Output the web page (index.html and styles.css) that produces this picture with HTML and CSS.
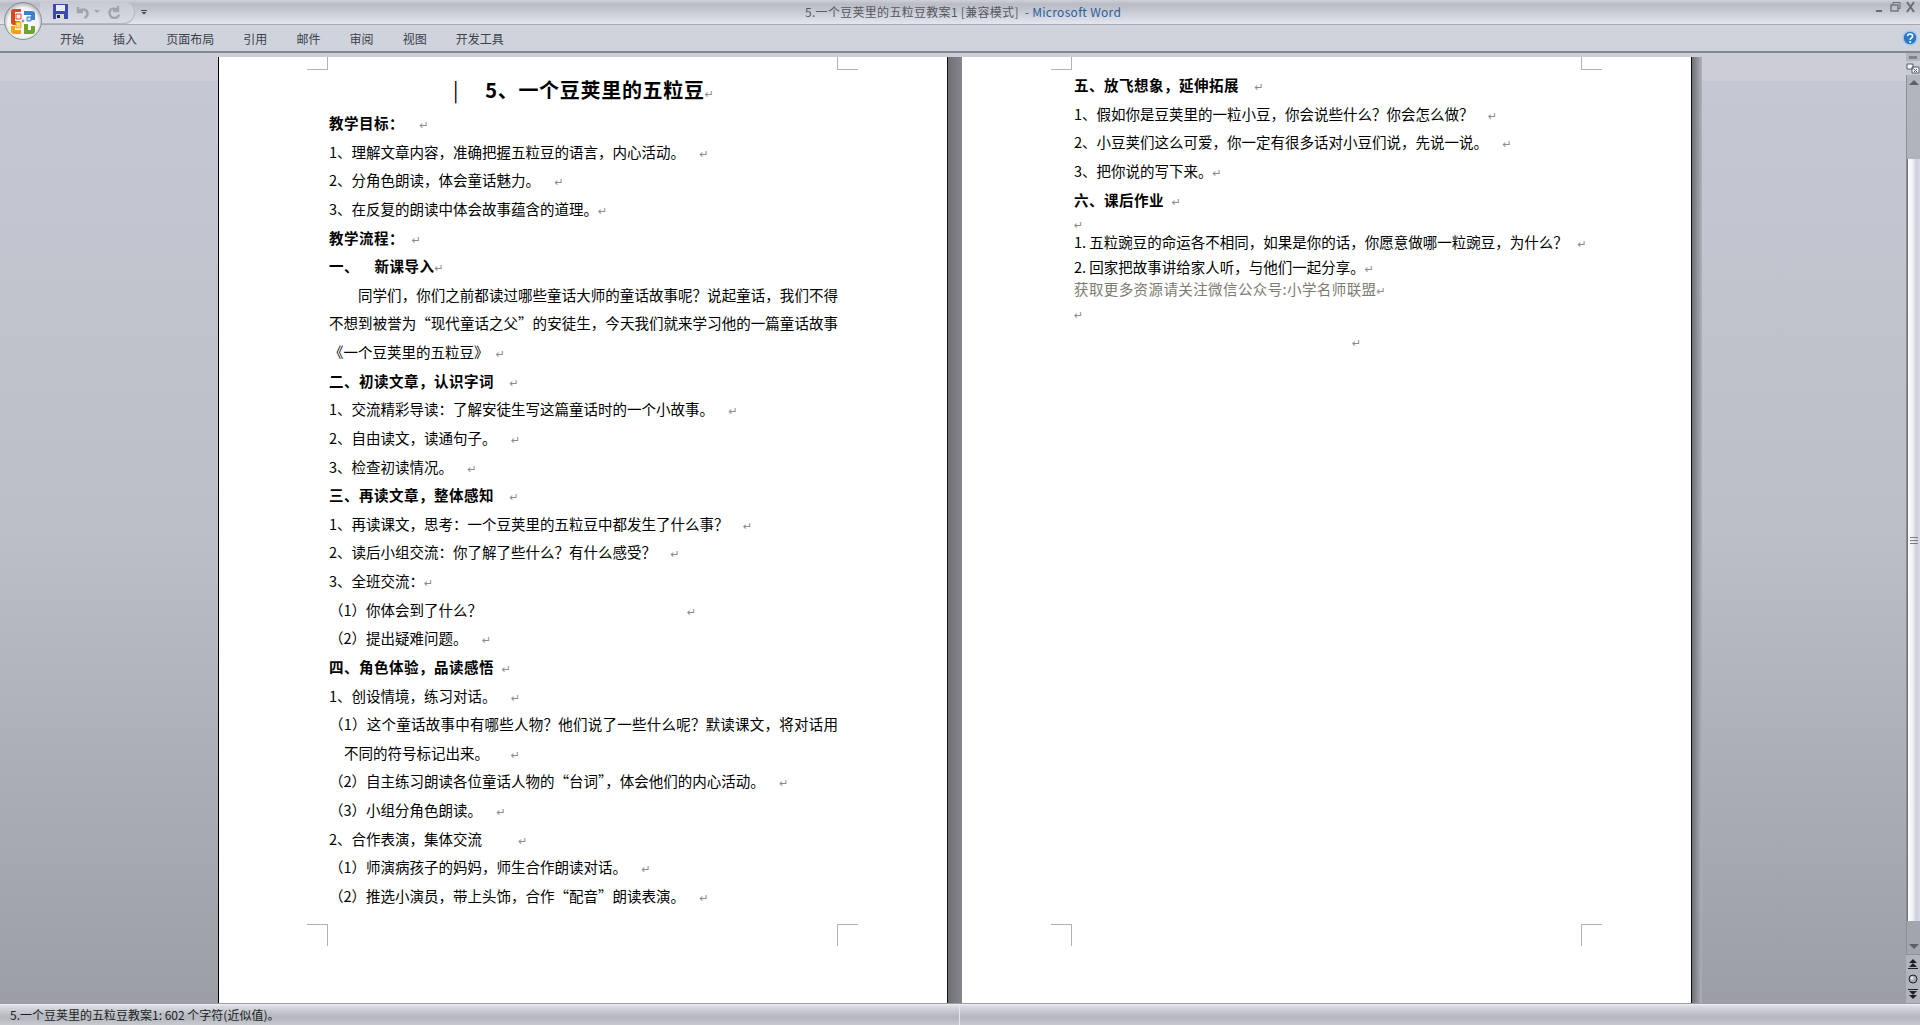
FILE: index.html
```html
<!DOCTYPE html>
<html lang="zh-CN">
<head>
    <meta charset="UTF-8">
    <title>5.一个豆荚里的五粒豆教案1 [兼容模式] - Microsoft Word</title>
    <link rel="stylesheet" href="styles.css">
</head>
<body>
<div class="app">
    <!-- Office button -->
    <svg class="office-btn" width="40" height="40" viewBox="0 0 40 40">
        <defs>
            <radialGradient id="orb" cx="50%" cy="55%" r="55%">
                <stop offset="0" stop-color="#ffffff"/>
                <stop offset=".75" stop-color="#f1f2f4"/>
                <stop offset="1" stop-color="#a9acb4"/>
            </radialGradient>
        </defs>
        <circle cx="20" cy="20" r="18.5" fill="url(#orb)" stroke="#8c8f97"/>
        <path d="M8 11q0-3 3-3h7v3h-6v9h5v4h-6q-3 0-3-3z" fill="#d9481c"/>
        <path d="M13 13h5v5h-5z" fill="#f6f6f6" stroke="#d9481c"/>
        <path d="M21 10h8q3 0 3 3v6h-4v-5h-7z" fill="#3f7fc4"/>
        <path d="M24 16h4v4h-4z" fill="#cfe2f5" stroke="#3f7fc4"/>
        <path d="M8 25h4v4h6v4h-7q-3 0-3-3z" fill="#f2a311"/>
        <path d="M13 21h5v6h-5z" fill="#fbd679" stroke="#f2a311"/>
        <path d="M21 23h4v6h3v-4h4v5q0 3-3 3h-8z" fill="#6fa52b"/>
        <circle cx="20" cy="20" r="1.4" fill="#7a9cc8"/>
    </svg>

    <!-- Title bar -->
    <header class="titlebar">
        <div class="qat">
            <svg width="15" height="15" viewBox="0 0 15 15">
                <rect width="15" height="15" fill="#3c49a8"/>
                <rect x="3" y="1" width="9" height="6" fill="#e8ecf8"/>
                <rect x="3" y="10" width="8" height="5" fill="#d6d8de"/>
                <rect x="4" y="11" width="3" height="3" fill="#222"/>
            </svg>
            <svg class="qat-undo" width="14" height="14" viewBox="0 0 14 14">
                <path d="M2 2v5h5M2.5 6.5C5 3.5 11 3.5 11.5 8c.2 2-1 4-3 5" fill="none" stroke="#a1a4ac" stroke-width="2.4"/>
            </svg>
            <span class="qat-caret"></span>
            <svg class="qat-redo" width="14" height="14" viewBox="0 0 14 14">
                <path d="M11 1v5H6M10.5 5.5C8 2.5 3 3 2.5 7.500c-.3 3 2 5.500 5 5.500 2.500 0 4-1.500 4.500-3.500" fill="none" stroke="#a1a4ac" stroke-width="2.400"/>
            </svg>
        </div>
        <span class="qat-more"></span>
        <div class="doc-title">5.一个豆荚里的五粒豆教案1 [兼容模式] <span class="app-name">- Microsoft Word</span></div>
        <div class="win-controls">
            <svg width="44" height="14" viewBox="0 0 44 14">
                <rect x="1" y="9" width="6" height="2" fill="#6a6d75"/>
                <rect x="16" y="4" width="7" height="6" fill="none" stroke="#6a6d75" stroke-width="1.300"/>
                <path d="M18 4V1.500h7v6h-2" fill="none" stroke="#6a6d75"/>
                <path d="M32 1l7 10M39 1l-7 10" stroke="#6a6d75" stroke-width="2"/>
            </svg>
        </div>
    </header>

    <!-- Ribbon tabs -->
    <nav class="ribbon">
        <span class="tab">开始</span>
        <span class="tab">插入</span>
        <span class="tab">页面布局</span>
        <span class="tab">引用</span>
        <span class="tab">邮件</span>
        <span class="tab">审阅</span>
        <span class="tab">视图</span>
        <span class="tab">开发工具</span>
        <svg class="help" width="16" height="16" viewBox="0 0 16 16">
            <circle cx="8" cy="8" r="7" fill="#2b78c8" stroke="#a8c8ea" stroke-width="1.500"/>
            <path d="M5.500 6.200C5.700 4.500 7 4 8 4c1.500 0 2.600.9 2.600 2.200 0 2-2.400 2-2.400 3.800" fill="none" stroke="#fff" stroke-width="1.600"/>
            <rect x="7.300" y="11" width="1.800" height="1.800" fill="#fff"/>
        </svg>
    </nav>

    <!-- Document area -->
    <main class="workspace">
        <div class="spread">
            <section class="page page-first">
                <i class="crop crop-tl"></i><i class="crop crop-tr"></i><i class="crop crop-bl"></i><i class="crop crop-br"></i>
                <div class="body">
                    <h1 class="doc-h"><span class="bar">|</span>5、一个豆荚里的五粒豆<span class="pm">↵</span></h1>
                    <p class="line b">教学目标：  <span class="pm">↵</span></p>
                    <p class="line">1、理解文章内容，准确把握五粒豆的语言，内心活动。  <span class="pm">↵</span></p>
                    <p class="line">2、分角色朗读，体会童话魅力。  <span class="pm">↵</span></p>
                    <p class="line">3、在反复的朗读中体会故事蕴含的道理。<span class="pm">↵</span></p>
                    <p class="line b">教学流程： <span class="pm">↵</span></p>
                    <p class="line b">一、  新课导入<span class="pm">↵</span></p>
                    <p class="line just first-indent">同学们，你们之前都读过哪些童话大师的童话故事呢？说起童话，我们不得</p>
                    <p class="line just">不想到被誉为“现代童话之父”的安徒生，今天我们就来学习他的一篇童话故事</p>
                    <p class="line">《一个豆荚里的五粒豆》 <span class="pm">↵</span></p>
                    <p class="line b">二、初读文章，认识字词  <span class="pm">↵</span></p>
                    <p class="line">1、交流精彩导读：了解安徒生写这篇童话时的一个小故事。  <span class="pm">↵</span></p>
                    <p class="line">2、自由读文，读通句子。  <span class="pm">↵</span></p>
                    <p class="line">3、检查初读情况。  <span class="pm">↵</span></p>
                    <p class="line b">三、再读文章，整体感知  <span class="pm">↵</span></p>
                    <p class="line">1、再读课文，思考：一个豆荚里的五粒豆中都发生了什么事？  <span class="pm">↵</span></p>
                    <p class="line">2、读后小组交流：你了解了些什么？有什么感受？  <span class="pm">↵</span></p>
                    <p class="line">3、全班交流：<span class="pm">↵</span></p>
                    <p class="line">（1）你体会到了什么？<span class="pm pm-far">↵</span></p>
                    <p class="line">（2）提出疑难问题。  <span class="pm">↵</span></p>
                    <p class="line b">四、角色体验，品读感悟 <span class="pm">↵</span></p>
                    <p class="line">1、创设情境，练习对话。  <span class="pm">↵</span></p>
                    <p class="line just">（1）这个童话故事中有哪些人物？他们说了一些什么呢？默读课文，将对话用</p>
                    <p class="line hang">不同的符号标记出来。   <span class="pm">↵</span></p>
                    <p class="line">（2）自主练习朗读各位童话人物的“台词”，体会他们的内心活动。  <span class="pm">↵</span></p>
                    <p class="line">（3）小组分角色朗读。  <span class="pm">↵</span></p>
                    <p class="line">2、合作表演，集体交流     <span class="pm">↵</span></p>
                    <p class="line">（1）师演病孩子的妈妈，师生合作朗读对话。  <span class="pm">↵</span></p>
                    <p class="line">（2）推选小演员，带上头饰，合作“配音”朗读表演。  <span class="pm">↵</span></p>
                </div>
            </section>
            <div class="gutter"></div>
            <section class="page page-second">
                <i class="crop crop-tl"></i><i class="crop crop-tr"></i><i class="crop crop-bl"></i><i class="crop crop-br"></i>
                <div class="body body-second">
                    <p class="line b">五、放飞想象，延伸拓展  <span class="pm">↵</span></p>
                    <p class="line">1、假如你是豆荚里的一粒小豆，你会说些什么？你会怎么做？  <span class="pm">↵</span></p>
                    <p class="line">2、小豆荚们这么可爱，你一定有很多话对小豆们说，先说一说。  <span class="pm">↵</span></p>
                    <p class="line">3、把你说的写下来。<span class="pm">↵</span></p>
                    <p class="line b">六、课后作业 <span class="pm">↵</span></p>
                    <p class="line h18"><span class="pm">↵</span></p>
                    <p class="line h20">1. 五粒豌豆的命运各不相同，如果是你的话，你愿意做哪一粒豌豆，为什么？   <span class="pm">↵</span></p>
                    <p class="line h20 gap5">2. 回家把故事讲给家人听，与他们一起分享。<span class="pm">↵</span></p>
                    <p class="line h24 promo">获取更多资源请关注微信公众号:小学名师联盟<span class="pm">↵</span></p>
                    <p class="line h24"><span class="pm">↵</span></p>
                    <p class="line h32 end-mark"><span class="pm">↵</span></p>
                </div>
            </section>
            <div class="gutter gutter-last"></div>
        </div>

        <!-- Vertical scrollbar -->
        <aside class="vscroll">
            <span class="split-handle"></span>
            <svg class="ruler-btn" width="14" height="14" viewBox="0 0 14 14">
                <rect width="14" height="14" fill="#c9ccd6"/>
                <path d="M1 3h6v5H1zM6 6h7v6H6z" fill="#fafbfd" stroke="#555a66"/>
                <path d="M8 8l3 3M11 8l-3 3" stroke="#555a66"/>
            </svg>
            <div class="track">
                <span class="arrow arrow-up"></span>
                <div class="thumb"><span class="grip"></span></div>
                <span class="arrow arrow-down"></span>
            </div>
            <div class="browse">
                <svg width="10" height="10" viewBox="0 0 10 10"><path d="M1 4L5 0l4 4zM1 8l4-4 4 4zM0 9h10v1H0z" fill="#1e2026"/></svg>
                <svg width="10" height="10" viewBox="0 0 10 10"><circle cx="5" cy="5" r="4" fill="#a8abb3" stroke="#1e2026"/><circle cx="4" cy="4" r="1.500" fill="#e8e9ec"/></svg>
                <svg width="10" height="10" viewBox="0 0 10 10"><path d="M0 0h10v1H0zM1 2l4 4 4-4zM1 6l4 4 4-4z" fill="#1e2026"/></svg>
            </div>
        </aside>
    </main>

    <!-- Status bar -->
    <footer class="statusbar">
        <div class="status-left">5.一个豆荚里的五粒豆教案1: 602 个字符(近似值)。</div>
    </footer>
</div>
</body>
</html>
```

FILE: styles.css
```css
/* Global */
* {
    box-sizing: border-box;
}

body {
    margin: 0;
    font-family: "Noto Sans CJK SC", "Noto Sans", sans-serif;
    color: #000;
}

.app {
    position: relative;
    display: flex;
    flex-direction: column;
    height: 100vh;
    overflow: hidden;
}

/* Office button */
.office-btn {
    position: absolute;
    left: 3px;
    top: 1px;
    z-index: 2;
}

/* Title bar */
.titlebar {
    position: relative;
    display: flex;
    align-items: center;
    height: 25px;
    padding-left: 40px;
    background: linear-gradient(#ced1d8, #b9bcc5 4px, #c3c6ce 10px, #d6d9e1 18px, #e3e6ee 24px);
    border-bottom: 1px solid #a6a9b1;
}

.qat {
    display: flex;
    align-items: center;
    width: 95px;
    height: 23px;
    padding-left: 13px;
    background: linear-gradient(#c6c9d1, #d9dce4);
    border: 1px solid #b4b7c0;
    border-left: none;
    border-top: none;
    border-radius: 0 12px 12px 0;
}

.qat-undo {
    margin-left: 8px;
}

.qat-caret {
    margin-left: 4px;
    border: 3px solid transparent;
    border-top: 3px solid #a1a4ac;
    border-bottom: none;
}

.qat-redo {
    margin-left: 7px;
}

.qat-more {
    margin-left: 6px;
    width: 6px;
    height: 5px;
    border-top: 1px solid #444;
    background: linear-gradient(#444, #444) center bottom / 6px 3px no-repeat;
    clip-path: polygon(0 0, 100% 0, 100% 40%, 50% 100%, 0 40%);
}

.doc-title {
    position: absolute;
    left: 805px;
    top: 2px;
    font-size: 12px;
    line-height: 19px;
    letter-spacing: .3px;
    white-space: nowrap;
    color: #55585f;
}

.app-name {
    color: #2a5f9e;
    margin-left: 3px;
}

.win-controls {
    position: absolute;
    right: 1px;
    top: 1px;
    line-height: 0;
}

/* Ribbon tabs */
.ribbon {
    display: flex;
    align-items: center;
    gap: 29.1px;
    height: 28px;
    padding-left: 60px;
    background: #cfd3dc;
    border-bottom: 2px solid #85888f;
}

.tab {
    font-size: 12px;
    color: #3d414b;
}

.help {
    margin-left: auto;
    margin-right: 2px;
}

/* Document area */
.workspace {
    flex: 1;
    display: flex;
    min-height: 0;
    overflow: hidden;
    padding-top: 4px;
    background: linear-gradient(#cdcdd8 0, #cdcdd8 28px, #c5c8d2 28px, #bcbfc8 50%, #9b9ea5 100%);
}

.spread {
    flex: 1;
    display: flex;
    align-items: flex-start;
    padding-left: 218px;
    min-width: 0;
}

.page {
    position: relative;
    height: 1100px;
    background: #fff;
}

.page-first {
    width: 729px;
    border-left: 1px solid #000;
}

.page-second {
    width: 729px;
}

.gutter {
    width: 15px;
    height: 1100px;
    background: linear-gradient(to right, #111 0, #111 1px, #6d6f75 1px, #84868c 100%);
}

.gutter-last {
    width: 11px;
    background: linear-gradient(to right, #111 0, #111 1px, #6d6f75 1px, #aeb1b9 100%);
}

/* Crop marks */
.crop {
    position: absolute;
    width: 21px;
    border: 0 solid #b2b2b2;
}

.crop-tl,
.crop-tr {
    top: 0;
    height: 13px;
    border-bottom-width: 1px;
}

.crop-bl,
.crop-br {
    top: 867px;
    height: 22px;
    border-top-width: 1px;
}

.crop-tl,
.crop-bl {
    border-right-width: 1px;
}

.crop-tr,
.crop-br {
    border-left-width: 1px;
}

.page-first .crop-tl,
.page-first .crop-bl {
    left: 88px;
}

.page-first .crop-tr,
.page-first .crop-br {
    left: 618px;
}

.page-second .crop-tl,
.page-second .crop-bl {
    left: 89px;
}

.page-second .crop-tr,
.page-second .crop-br {
    left: 619px;
}

/* Text */
.body {
    width: 509px;
    margin-left: 110px;
    padding-top: 16px;
}

.body-second {
    margin-left: 112px;
    padding-top: 14px;
}

.doc-h {
    height: 34px;
    margin: 0 0 2px;
    font-size: 20px;
    font-weight: 700;
    line-height: 34px;
    letter-spacing: .7px;
    text-align: center;
    white-space: pre;
}

.bar {
    font-weight: 400;
    margin-right: 26px;
}

.line {
    margin: 0;
    font-size: 14.5px;
    line-height: 28.63px;
    white-space: pre;
    word-spacing: 4px;
}

.b {
    font-weight: 700;
    letter-spacing: .5px;
}

.just {
    white-space: normal;
    text-align: justify;
    text-align-last: justify;
}

.first-indent {
    text-indent: 2em;
}

.hang {
    padding-left: 15px;
}

.h18 {
    line-height: 18px;
}

.h20 {
    line-height: 20px;
    word-spacing: 0;
}

.h24 {
    line-height: 24px;
}

.h32 {
    line-height: 32px;
}

.gap5 {
    margin-top: 5px;
}

.promo {
    color: #7d7a72;
    letter-spacing: .4px;
}

.end-mark {
    padding-left: 278px;
}

/* Paragraph mark */
.pm {
    font-family: "DejaVu Sans", sans-serif;
    font-size: 11px;
    font-weight: 400;
    line-height: 0;
    color: #8a8a8a;
    letter-spacing: 0;
}

.pm-far {
    margin-left: 205px;
}

/* Vertical scrollbar */
.vscroll {
    width: 14px;
    flex-shrink: 0;
    display: flex;
    flex-direction: column;
    align-items: center;
    margin-top: -4px;
    background: #b3b6bf;
}

.split-handle {
    width: 8px;
    height: 3px;
    margin: 3px 0 2px;
    background: #7f828a;
}

.ruler-btn {
    display: block;
}

.track {
    flex: 1;
    width: 14px;
    display: flex;
    flex-direction: column;
    align-items: center;
    min-height: 0;
    background: linear-gradient(#b2b5be, #a2a5ad);
    border-left: 1px solid #8d9098;
    border-bottom: 1px solid #8d9098;
}

.arrow {
    flex-shrink: 0;
    border-left: 5px solid transparent;
    border-right: 5px solid transparent;
}

.arrow-up {
    margin: 5px 0 74px;
    border-bottom: 5px solid #5c606a;
}

.arrow-down {
    margin: 23px 0 5px;
    border-top: 5px solid #5c606a;
}

.thumb {
    flex: 1;
    width: 13px;
    display: flex;
    align-items: center;
    justify-content: center;
    background: linear-gradient(to right, #ffffff, #eef0f5 40%, #ccd0da 70%, #d9dce5);
    border-left: 1px solid #6c6f76;
    margin-left: -1px;
}

.grip {
    width: 8px;
    height: 7px;
    background: repeating-linear-gradient(#7b7e86 0, #7b7e86 1px, transparent 1px, transparent 3px);
}

.browse {
    height: 48px;
    width: 14px;
    flex-shrink: 0;
    display: flex;
    flex-direction: column;
    align-items: center;
    justify-content: space-around;
    background: #b1b4bb;
    padding: 2px 0;
}

.browse svg {
    display: block;
}

/* Status bar */
.statusbar {
    display: flex;
    height: 22px;
    flex-shrink: 0;
    background: linear-gradient(#f0f1f4 0, #dadce1 2px, #b9bcc3 11px, #b4b7be 14px, #c8cad0 100%);
    border-top: 1px solid #9a9ca3;
}

.status-left {
    width: 960px;
    padding-left: 10px;
    font-size: 12px;
    line-height: 21px;
    color: #1c1d22;
    border-right: 1px solid #e6e7ea;
}
```
